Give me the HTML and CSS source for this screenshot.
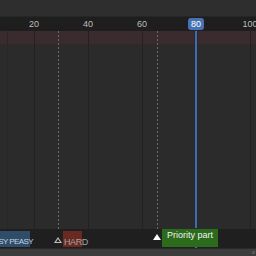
FILE: index.html
```html
<!DOCTYPE html>
<html lang="en">
<head>
    <meta charset="UTF-8">
    <title>Timeline</title>
    <link rel="stylesheet" href="styles.css">
</head>
<body>
    <div class="timeline">
        <div class="header"></div>
        <div class="ruler">
            <span class="tick" style="left: 34px">20</span>
            <span class="tick" style="left: 88px">40</span>
            <span class="tick" style="left: 142px">60</span>
            <span class="tick" style="left: 250px">100</span>
            <span class="current" style="left: 196px">80</span>
        </div>
        <div class="view">
            <div class="range"></div>
            <div class="grid-line minor" style="left: 7px"></div>
            <div class="grid-line" style="left: 34px"></div>
            <div class="grid-line" style="left: 88px"></div>
            <div class="grid-line" style="left: 142px"></div>
            <div class="grid-line" style="left: 250px"></div>
            <div class="marker-line" style="left: 58px"></div>
            <div class="marker-line" style="left: 157px"></div>
            <div class="playhead" style="left: 195px"></div>
        </div>
        <div class="markers">
            <div class="playhead" style="left: 195px"></div>
            <div class="strip easy" style="left: 0; width: 30px"><span class="name">EASY PEASY</span></div>
            <div class="strip hard" style="left: 63px; width: 19px"><span class="name">HARD</span></div>
            <div class="strip priority" style="left: 162px; width: 56px"><span class="name">Priority part</span></div>
            <span class="flag" style="left: 54px"></span>
            <span class="flag selected" style="left: 153px"></span>
        </div>
        <div class="scrollbar"><span class="grip"></span></div>
    </div>
</body>
</html>
```

FILE: styles.css
```css
body {
    margin: 0;
    background: #2b2b2b;
    font-family: "Liberation Sans", "DejaVu Sans", sans-serif;
}

.timeline {
    width: 256px;
    height: 256px;
    display: flex;
    flex-direction: column;
    overflow: hidden;
}

.header {
    height: 16px;
    background: #2e2e2e;
    border-bottom: 1px solid #262626;
}

.ruler {
    position: relative;
    height: 14px;
    background: #1e1e1e;
}

.tick {
    position: absolute;
    top: 1px;
    transform: translateX(-50%);
    font-size: 9px;
    line-height: 12px;
    color: #bcbcbc;
}

.current {
    position: absolute;
    top: 1px;
    transform: translateX(-50%);
    padding: 0 3px;
    background: #4772b3;
    border-radius: 3px;
    font-size: 9px;
    line-height: 12px;
    color: #ffffff;
    z-index: 2;
}

.view {
    position: relative;
    flex: 1;
    background: #2b2b2b;
}

.range {
    height: 13px;
    background: #3a2c2e;
}

.grid-line {
    position: absolute;
    top: 0;
    bottom: 0;
    width: 1px;
    background: #222222;
}

.grid-line.minor {
    background: #272727;
}

.marker-line {
    position: absolute;
    top: 0;
    bottom: 0;
    width: 1px;
    background: repeating-linear-gradient(to bottom, #6a6a6a 0 2px, transparent 2px 4px);
}

.playhead {
    position: absolute;
    top: 0;
    bottom: 0;
    width: 2px;
    background: #4d6a9c;
    box-shadow: 0 0 0 1px #1f2a3d;
}

.markers {
    position: relative;
    height: 19px;
    background: #1f1f1f;
}

.strip {
    position: absolute;
    top: 2px;
    height: 16px;
}

.strip.easy { background: #2f4c68; }
.strip.hard { background: #6a2a22; }
.strip.priority { top: 0; height: 18px; background: #2d6b1c; }

.name {
    position: absolute;
    top: 5px;
    font-size: 9px;
    line-height: 12px;
    letter-spacing: -0.4px;
    white-space: nowrap;
    color: #d8d8d8;
}

.easy .name {
    right: -3px;
    font-size: 8px;
    letter-spacing: -0.6px;
    color: #c6d4e2;
}

.hard .name {
    left: 1px;
    color: #a8a0a0;
}

.priority .name {
    left: 5px;
    top: 0;
    letter-spacing: 0;
    color: #f2f2f2;
}

.flag {
    position: absolute;
    top: 8px;
    width: 0;
    height: 0;
    border-left: 4px solid transparent;
    border-right: 4px solid transparent;
    border-bottom: 6px solid #bdbdbd;
}

.flag::after {
    content: "";
    position: absolute;
    left: -2px;
    top: 2px;
    border-left: 2px solid transparent;
    border-right: 2px solid transparent;
    border-bottom: 3px solid #1f1f1f;
}

.flag.selected {
    top: 5px;
    border-bottom-color: #ffffff;
}

.flag.selected::after {
    display: none;
}

.scrollbar {
    position: relative;
    height: 7px;
    background: #3c3c3c;
    border-top: 1px solid #2a2a2a;
}

.grip {
    position: absolute;
    right: 1px;
    top: 2px;
    width: 3px;
    height: 3px;
    background: #555555;
}
```
